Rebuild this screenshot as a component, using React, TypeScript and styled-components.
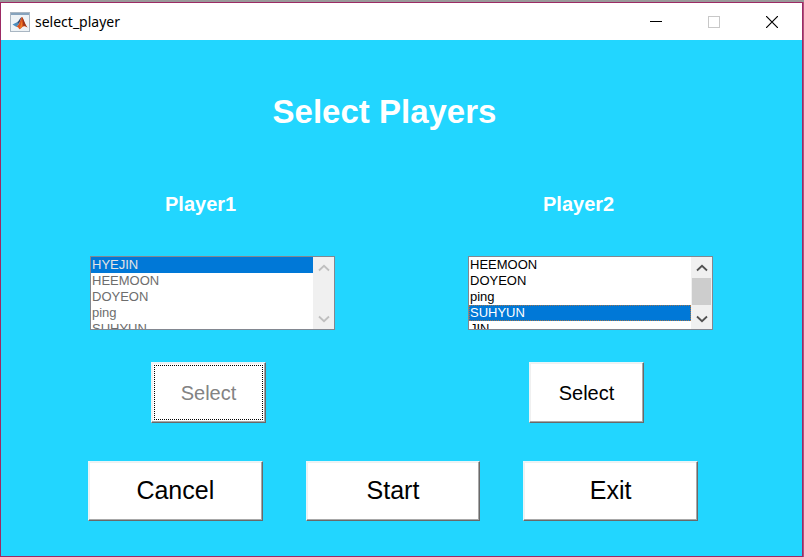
import React, { useLayoutEffect, useRef } from "react";
import styled, { createGlobalStyle } from "styled-components";

const GlobalStyle = createGlobalStyle`
  *, *::before, *::after { box-sizing: border-box; }
  body {
    margin: 0;
    background: #b0527f;
    font-family: "Liberation Sans", Arial, sans-serif;
  }
`;

const Desktop = styled.div`
  display: flex;
  min-height: 100vh;
  padding-right: 1px;
  border-top: 2px solid #999999;
`;

const Window = styled.div`
  flex: 1;
  display: flex;
  flex-direction: column;
  border: 1px solid #9c2a64;
  background: #22d6ff;
`;

const TitleBar = styled.header`
  display: flex;
  align-items: center;
  height: 37px;
  padding: 0 7px 0 9px;
  background: #ffffff;
`;

const WindowTitle = styled.span`
  flex: 1;
  padding-left: 5px;
  font: 14px/20px "Noto Sans", "Open Sans", sans-serif;
  color: #000000;
`;

const CaptionButton = styled.button`
  display: flex;
  align-items: center;
  justify-content: center;
  width: 46px;
  height: 30px;
  padding: 0;
  border: 0;
  background: transparent;
  color: #000000;

  &:disabled {
    color: #c8c8c8;
  }
`;

const CaptionButtons = styled.div`
  display: flex;
  gap: 12px;
`;

const Content = styled.main`
  flex: 1;
  display: flex;
  flex-direction: column;
  padding-top: 53px;
`;

const Heading = styled.h1`
  margin: 0;
  padding-right: 34px;
  font-size: 33px;
  line-height: 38px;
  text-align: center;
  color: #ffffff;
`;

const Players = styled.div`
  display: grid;
  grid-template-columns: 1fr 1fr;
  column-gap: 133px;
  padding: 61px 89px 0;
`;

const PlayerPanel = styled.section`
  display: flex;
  flex-direction: column;
`;

const PlayerLabel = styled.label`
  padding-left: 75px;
  font-size: 20px;
  font-weight: bold;
  line-height: 24px;
  color: #ffffff;
`;

const ListFrame = styled.div`
  display: flex;
  height: 74px;
  margin-top: 40px;
  border: 1px solid #828790;
  background: #ffffff;
`;

const ListBox = styled.select`
  flex: 1;
  min-width: 0;
  height: 72px;
  padding: 0;
  border: 0;
  border-radius: 0;
  outline: 0;
  overflow: hidden;
  background: #ffffff;
  color: #000000;
  font: 13px/16px "Liberation Sans", Arial, sans-serif;
  opacity: 1;

  &:disabled {
    color: #6d6d6d;
  }
`;

const ListItem = styled.option<{ $dimmed: boolean }>`
  height: 16px;
  min-height: 16px;
  padding: 0 0 0 1px;
  line-height: 16px;
  color: ${(p) => (p.$dimmed ? "#6d6d6d" : "#000000")};

  &:checked {
    background: #0078d7 linear-gradient(#0078d7, #0078d7);
    color: #ffffff !important;
    -webkit-text-fill-color: ${(p) => (p.$dimmed ? "#e4e4e4" : "#ffffff")};
    outline: ${(p) => (p.$dimmed ? "0" : "1px dotted #a0764f")};
    outline-offset: -1px;
  }
`;

const ScrollBar = styled.div`
  display: flex;
  flex-direction: column;
  width: 21px;
  background: #f0f0f0;
`;

const ScrollArrow = styled.button`
  display: flex;
  align-items: center;
  justify-content: center;
  height: 21px;
  padding: 0;
  border: 0;
  background: transparent;
  color: #505050;

  &:disabled {
    color: #bfbfbf;
  }
`;

const ScrollTrack = styled.div`
  flex: 1;
  display: flex;
  padding: 0 1px;
`;

const ScrollThumb = styled.div`
  flex: 1;
  height: 27px;
  background: #cdcdcd;
`;

const PushButton = styled.button`
  padding: 0;
  border: 1px solid;
  border-color: #e6f6fa #696969 #696969 #e6f6fa;
  box-shadow: inset -1px -1px 0 #a8a8a8, inset 1px 1px 0 #f0f0f0;
  background: #ffffff;
  color: #000000;
  font-family: inherit;
`;

const SelectButton = styled(PushButton)`
  width: 115px;
  height: 61px;
  margin: 32px 0 0 61px;
  font-size: 20px;
  line-height: 24px;

  &:disabled {
    color: #838383;
    outline: 1px dotted #000000;
    outline-offset: -4px;
  }
`;

const Actions = styled.div`
  display: grid;
  grid-template-columns: repeat(3, 1fr);
  column-gap: 43px;
  padding: 38px 104px 35px 87px;
`;

const ActionButton = styled(PushButton)`
  height: 60px;
  padding-bottom: 2px;
  font-size: 25px;
  line-height: 30px;
`;

const AppIcon = () => (
  <svg width="20" height="20" viewBox="0 0 20 20" aria-hidden="true">
    <rect x="0.5" y="0.5" width="19" height="19" fill="#eef3f6" stroke="#a9b6c2" />
    <rect x="1" y="1" width="18" height="2" fill="#86a3bd" />
    <path d="M2.5 12.5 7 10.3 9 12 6.5 15Z" fill="#4a8dbd" />
    <path d="M7 10.3C9 9.3 10 5.8 11.8 5L9 12Z" fill="#2c4a76" />
    <path d="M6.5 15 9 12C10.3 9 11 6 11.8 5 13.5 5.8 14.5 12 17.5 15.5 15.2 14 13.7 13.8 12.3 15 11.3 16 10.4 17.2 9.3 17.3 8.7 15.8 8 14.5 6.5 15Z" fill="#d9541e" />
    <path d="M11.8 5C13.5 5.8 14.5 12 17.5 15.5 15.2 14 14.4 13.4 13.4 14.2 13.2 10.5 12.6 7.5 11.8 5Z" fill="#9c351b" />
    <path d="M9.3 16.8C10.6 14.5 11.2 11.5 11.6 8.5 12 11.5 12 13.2 11.8 14.8Z" fill="#f08a2c" />
  </svg>
);

const Chevron = ({ down = false }: { down?: boolean }) => (
  <svg width="12" height="8" viewBox="0 0 12 8" fill="none" stroke="currentColor" strokeWidth="1.8" aria-hidden="true">
    <path d={down ? "M1 1.5 6 6.2 11 1.5" : "M1 6.5 6 1.8 11 6.5"} />
  </svg>
);

const NAMES = ["HYEJIN", "HEEMOON", "DOYEON", "ping", "SUHYUN", "JIN"];
const ROW_HEIGHT = 16;

interface PlayerProps {
  id: string;
  label: string;
  selected: string;
  firstRow: number;
  locked?: boolean;
}

function Player({ id, label, selected, firstRow, locked = false }: PlayerProps) {
  const list = useRef<HTMLSelectElement>(null);

  useLayoutEffect(() => {
    const scroll = () => {
      if (list.current) list.current.scrollTop = firstRow * ROW_HEIGHT;
    };
    scroll();
    const frame = requestAnimationFrame(scroll);
    return () => cancelAnimationFrame(frame);
  }, [firstRow]);

  const scrollBy = (rows: number) => {
    if (list.current) list.current.scrollTop += rows * ROW_HEIGHT;
  };

  return (
    <PlayerPanel>
      <PlayerLabel htmlFor={id}>{label}</PlayerLabel>
      <ListFrame>
        <ListBox id={id} ref={list} size={4} defaultValue={selected} disabled={locked}>
          {NAMES.map((name) => (
            <ListItem key={name} value={name} $dimmed={locked}>
              {name}
            </ListItem>
          ))}
        </ListBox>
        <ScrollBar>
          <ScrollArrow aria-label="Scroll up" disabled={locked} onClick={() => scrollBy(-1)}>
            <Chevron />
          </ScrollArrow>
          <ScrollTrack>{!locked && <ScrollThumb />}</ScrollTrack>
          <ScrollArrow aria-label="Scroll down" disabled={locked} onClick={() => scrollBy(1)}>
            <Chevron down />
          </ScrollArrow>
        </ScrollBar>
      </ListFrame>
      <SelectButton disabled={locked}>Select</SelectButton>
    </PlayerPanel>
  );
}

export default function App() {
  return (
    <>
      <GlobalStyle />
      <Desktop>
        <Window>
          <TitleBar>
            <AppIcon />
            <WindowTitle>select_player</WindowTitle>
            <CaptionButtons>
              <CaptionButton aria-label="Minimize">
                <svg width="12" height="12" viewBox="0 0 12 12" stroke="currentColor">
                  <path d="M0 5.5H12" />
                </svg>
              </CaptionButton>
              <CaptionButton aria-label="Maximize" disabled>
                <svg width="12" height="12" viewBox="0 0 12 12" fill="none" stroke="currentColor">
                  <rect x="0.5" y="0.5" width="11" height="11" />
                </svg>
              </CaptionButton>
              <CaptionButton aria-label="Close">
                <svg width="12" height="12" viewBox="0 0 12 12" stroke="currentColor" strokeWidth="1.2">
                  <path d="M0 0 12 12M12 0 0 12" />
                </svg>
              </CaptionButton>
            </CaptionButtons>
          </TitleBar>
          <Content>
            <Heading>Select Players</Heading>
            <Players>
              <Player id="player1" label="Player1" selected="HYEJIN" firstRow={0} locked />
              <Player id="player2" label="Player2" selected="SUHYUN" firstRow={1} />
            </Players>
            <Actions>
              <ActionButton>Cancel</ActionButton>
              <ActionButton>Start</ActionButton>
              <ActionButton>Exit</ActionButton>
            </Actions>
          </Content>
        </Window>
      </Desktop>
    </>
  );
}
